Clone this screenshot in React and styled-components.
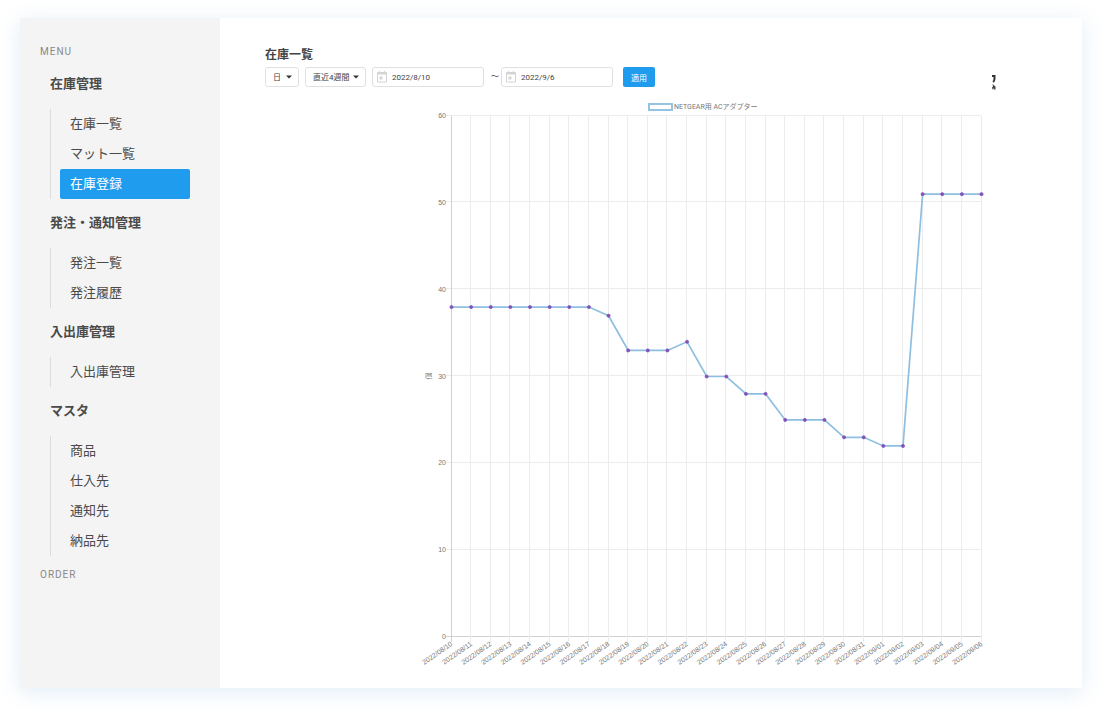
import React from "react";
import styled, { createGlobalStyle, css } from "styled-components";

const GlobalStyle = createGlobalStyle`
  * { box-sizing: border-box; }
  body {
    margin: 0;
    background: #fff;
    color: #444;
    font-family: Roboto, "Noto Sans CJK JP", sans-serif;
  }
`;

const Page = styled.div`
  min-height: 100vh;
  display: flex;
  padding: 18px 20px 23px;
`;

const Window = styled.div`
  flex: 1;
  min-width: 0;
  display: flex;
  background: #fff;
  box-shadow: 0 4px 20px rgba(70, 140, 200, 0.16);
`;

const Sidebar = styled.nav`
  flex: none;
  width: 200px;
  padding: 27px 30px 28px 20px;
  background: #f4f4f4;
`;

const SectionLabel = styled.div`
  height: 14px;
  line-height: 14px;
  font-size: 10px;
  letter-spacing: 1px;
  color: #888;
`;

const Groups = styled.div`
  padding: 10px 0 3px 10px;
`;

const GroupTitle = styled.h2`
  margin: 0;
  height: 30px;
  line-height: 30px;
  font-size: 13px;
  font-weight: 700;
  color: #4a4a4a;
`;

const List = styled.ul`
  list-style: none;
  margin: 10px 0 9px;
  padding: 0 0 0 9px;
  border-left: 1px solid #ddd;
`;

const ItemLink = styled.a`
  display: block;
  height: 30px;
  padding-left: 10px;
  line-height: 30px;
  font-size: 13px;
  color: #4a4a4a;
  text-decoration: none;
  border-radius: 2px;
  ${(p) => p.$active && css`
    background: #209cee;
    color: #fff;
  `}
`;

const Main = styled.main`
  flex: 1;
  min-width: 0;
  padding: 28px 45px 18px;
`;

const Title = styled.h1`
  margin: 0;
  height: 18px;
  line-height: 18px;
  font-size: 12px;
  font-weight: 700;
`;

const Toolbar = styled.form`
  display: flex;
  align-items: center;
  height: 20px;
  margin-top: 3px;
  font-size: 8px;
`;

const control = css`
  height: 20px;
  border: 1px solid #e0e0e0;
  border-radius: 3px;
  background: #fff;
`;

const SelectBox = styled.label`
  ${control}
  display: grid;
  align-items: center;
  width: ${(p) => p.$width}px;
  margin-right: 6px;
  svg {
    grid-area: 1 / 1;
    justify-self: end;
    margin-right: 6px;
    pointer-events: none;
  }
`;

const Select = styled.select`
  grid-area: 1 / 1;
  appearance: none;
  width: 100%;
  height: 18px;
  padding: 0 0 0 7px;
  border: 0;
  background: transparent;
  font: inherit;
  color: #444;
`;

const DateBox = styled.label`
  ${control}
  display: flex;
  align-items: center;
  gap: 5px;
  width: 112px;
  padding-left: 4px;
  svg { flex: none; }
`;

const DateInput = styled.input`
  flex: 1;
  min-width: 0;
  height: 18px;
  padding: 0;
  border: 0;
  background: transparent;
  font: inherit;
  color: #444;
`;

const Tilde = styled.span`
  width: 17px;
  padding-left: 7px;
  line-height: 18px;
`;

const Apply = styled.button`
  width: 32px;
  height: 20px;
  margin-left: 10px;
  padding: 0;
  border: 0;
  border-radius: 2px;
  background: #209cee;
  color: #fff;
  font: inherit;
`;

const Mark = styled.svg`
  margin-left: auto;
  margin-right: 41px;
  align-self: flex-end;
  margin-bottom: -3px;
`;

const Chart = styled.svg`
  display: block;
  width: 572px;
  max-width: 100%;
  margin: 12px 0 0 154px;
  overflow: visible;
  font-family: "Liberation Sans", "Noto Sans CJK JP", sans-serif;
  font-size: 7px;
  fill: #777;
`;

const LegendText = styled.text`
  font-family: Roboto, "Noto Sans CJK JP", sans-serif;
`;

const GROUPS = [
  { title: "在庫管理", items: ["在庫一覧", "マット一覧", "在庫登録"] },
  { title: "発注・通知管理", items: ["発注一覧", "発注履歴"] },
  { title: "入出庫管理", items: ["入出庫管理"] },
  { title: "マスタ", items: ["商品", "仕入先", "通知先", "納品先"] },
];
const ACTIVE = "在庫登録";

const STOCK = [
  38, 38, 38, 38, 38, 38, 38, 38, 37, 33, 33, 33, 34, 30,
  30, 28, 28, 25, 25, 25, 23, 23, 22, 22, 51, 51, 51, 51,
];
const DAYS = STOCK.map((_, i) => {
  const d = new Date(Date.UTC(2022, 7, 10 + i));
  return d.toISOString().slice(0, 10).replaceAll("-", "/");
});

const PLOT = { left: 32, right: 562, top: 17, bottom: 538 };
const xAt = (i) => PLOT.left + ((PLOT.right - PLOT.left) * i) / (STOCK.length - 1);
const yAt = (v) => PLOT.bottom - ((PLOT.bottom - PLOT.top) * v) / 60;
const crisp = (n) => Math.floor(n) + 0.5;

function Caret() {
  return (
    <svg width="6" height="4" aria-hidden="true">
      <path d="M0 0.5h6L3 3.5z" fill="#333" />
    </svg>
  );
}

function CalendarIcon() {
  return (
    <svg width="10" height="12" viewBox="0 0 10 12" aria-hidden="true">
      <path d="M2.5 0v2M7.5 0v2M0.5 1.5h9v9.5h-9z" fill="none" stroke="#d4d4d4" />
      <path d="M0.5 1.5h9v2h-9z" fill="#d4d4d4" />
      <path d="M2.5 5.5h3v3h-3z" fill="#d4d4d4" />
    </svg>
  );
}

function StockChart() {
  return (
    <Chart viewBox="0 0 572 570" role="img" aria-label="在庫数の推移">
      <rect x="230" y="5" width="23" height="6" fill="#fff" stroke="#94c3e3" strokeWidth="2" />
      <LegendText x="255" y="10">NETGEAR用 ACアダプター</LegendText>
      {[0, 10, 20, 30, 40, 50, 60].map((v) => (
        <g key={v}>
          <line x1={PLOT.left - 5} x2={PLOT.right} y1={crisp(yAt(v) - 1)} y2={crisp(yAt(v) - 1)} stroke={v ? "#ececec" : "#d0d0d0"} />
          <text x={PLOT.left - 5} y={yAt(v) + 2} textAnchor="end">{v}</text>
        </g>
      ))}
      {DAYS.map((day, i) => (
        <g key={day}>
          <line x1={crisp(xAt(i))} x2={crisp(xAt(i))} y1={PLOT.top} y2={PLOT.bottom + 5} stroke={i ? "#ececec" : "#d0d0d0"} />
          <text transform={`translate(${xAt(i) + 2} ${PLOT.bottom + 8}) rotate(-35)`} textAnchor="end">{day}</text>
        </g>
      ))}
      <text transform="translate(12 277) rotate(-90)" textAnchor="middle">個</text>
      <polyline
        points={STOCK.map((v, i) => `${xAt(i) + 0.5},${yAt(v)}`).join(" ")}
        fill="none"
        stroke="#8fbfe0"
        strokeWidth="1.7"
      />
      {STOCK.map((v, i) => (
        <circle key={DAYS[i]} cx={xAt(i) + 0.5} cy={yAt(v)} r="1.6" fill="#9b45b5" stroke="#6a62c0" strokeWidth="0.7" />
      ))}
    </Chart>
  );
}

export default function App() {
  return (
    <>
      <GlobalStyle />
      <Page>
        <Window>
          <Sidebar>
            <SectionLabel>MENU</SectionLabel>
            <Groups>
              {GROUPS.map((g) => (
                <React.Fragment key={g.title}>
                  <GroupTitle>{g.title}</GroupTitle>
                  <List>
                    {g.items.map((item) => (
                      <li key={item}>
                        <ItemLink href="#" $active={item === ACTIVE}>{item}</ItemLink>
                      </li>
                    ))}
                  </List>
                </React.Fragment>
              ))}
            </Groups>
            <SectionLabel>ORDER</SectionLabel>
          </Sidebar>
          <Main>
            <Title>在庫一覧</Title>
            <Toolbar onSubmit={(e) => e.preventDefault()}>
              <SelectBox $width={34}>
                <Select aria-label="単位"><option>日</option></Select>
                <Caret />
              </SelectBox>
              <SelectBox $width={61}>
                <Select aria-label="期間"><option>直近4週間</option></Select>
                <Caret />
              </SelectBox>
              <DateBox>
                <CalendarIcon />
                <DateInput aria-label="開始日" defaultValue="2022/8/10" />
              </DateBox>
              <Tilde>〜</Tilde>
              <DateBox>
                <CalendarIcon />
                <DateInput aria-label="終了日" defaultValue="2022/9/6" />
              </DateBox>
              <Apply type="submit">適用</Apply>
              <Mark width="4" height="15" aria-hidden="true">
                <path d="M0 1h2.5v2.5q0 2.5-1.5 3.5" fill="none" stroke="#333" strokeWidth="2" />
                <path d="M0.5 9l3 2.5v3h-1.5l-1-1.5l-1 2v-2.5l1-1z" fill="#444" />
              </Mark>
            </Toolbar>
            <StockChart />
          </Main>
        </Window>
      </Page>
    </>
  );
}
